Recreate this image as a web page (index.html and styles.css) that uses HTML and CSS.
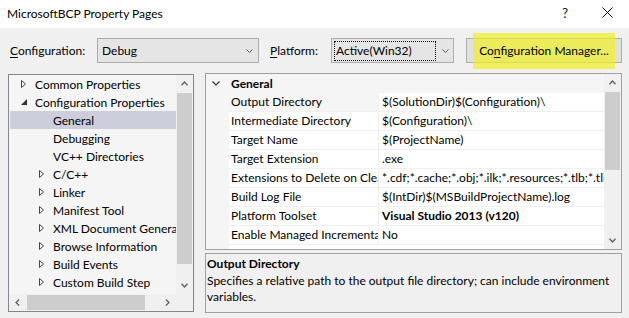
FILE: index.html
```html
<!DOCTYPE html>
<html>
<head>
<meta charset="utf-8">
<title>MicrosoftBCP Property Pages</title>
<link rel="stylesheet" href="styles.css">
</head>
<body>
<div class="titlebar">
  <span class="title">MicrosoftBCP Property Pages</span>
  <span class="help">?</span>
  <svg class="close" width="11" height="11" viewBox="0 0 11 11"><path d="M0.5 0.5L10.5 10.5M10.5 0.5L0.5 10.5" stroke="#000" stroke-width="1" fill="none"/></svg>
</div>

<div class="toolbar">
  <span class="lbl lbl-config"><u>C</u>onfiguration:</span>
  <div class="combo combo-config">
    <span>Debug</span>
    <svg class="chev" width="7" height="4" viewBox="0 0 7 4"><path d="M0.5 0.5L3.5 3.5L6.5 0.5" fill="none" stroke="#555"/></svg>
  </div>
  <span class="lbl lbl-platform"><u>P</u>latform:</span>
  <div class="combo combo-platform">
    <span class="focus">Active(Win32)</span>
    <svg class="chev" width="7" height="4" viewBox="0 0 7 4"><path d="M0.5 0.5L3.5 3.5L6.5 0.5" fill="none" stroke="#555"/></svg>
  </div>
  <div class="btn">
    <div class="highlight"></div>
    <span class="btn-text">Co<u>n</u>figuration Manager...</span>
  </div>
</div>

<div class="main">
  <div class="tree-panel">
    <div class="tree">
      <div class="item l0"><span class="exp"><svg width="5" height="8" viewBox="0 0 5 8"><path d="M0.5 0.5L4.5 4L0.5 7.5Z" fill="none" stroke="#444"/></svg></span>Common Properties</div>
      <div class="item l0"><span class="exp"><svg width="6" height="6" viewBox="0 0 6 6"><path d="M6 0L6 6L0 6Z" fill="#333"/></svg></span>Configuration Properties</div>
      <div class="item l1 selected"><span class="exp"></span>General</div>
      <div class="item l1"><span class="exp"></span>Debugging</div>
      <div class="item l1"><span class="exp"></span>VC++ Directories</div>
      <div class="item l1"><span class="exp"><svg width="5" height="8" viewBox="0 0 5 8"><path d="M0.5 0.5L4.5 4L0.5 7.5Z" fill="none" stroke="#444"/></svg></span>C/C++</div>
      <div class="item l1"><span class="exp"><svg width="5" height="8" viewBox="0 0 5 8"><path d="M0.5 0.5L4.5 4L0.5 7.5Z" fill="none" stroke="#444"/></svg></span>Linker</div>
      <div class="item l1"><span class="exp"><svg width="5" height="8" viewBox="0 0 5 8"><path d="M0.5 0.5L4.5 4L0.5 7.5Z" fill="none" stroke="#444"/></svg></span>Manifest Tool</div>
      <div class="item l1"><span class="exp"><svg width="5" height="8" viewBox="0 0 5 8"><path d="M0.5 0.5L4.5 4L0.5 7.5Z" fill="none" stroke="#444"/></svg></span>XML Document Generator</div>
      <div class="item l1"><span class="exp"><svg width="5" height="8" viewBox="0 0 5 8"><path d="M0.5 0.5L4.5 4L0.5 7.5Z" fill="none" stroke="#444"/></svg></span>Browse Information</div>
      <div class="item l1"><span class="exp"><svg width="5" height="8" viewBox="0 0 5 8"><path d="M0.5 0.5L4.5 4L0.5 7.5Z" fill="none" stroke="#444"/></svg></span>Build Events</div>
      <div class="item l1"><span class="exp"><svg width="5" height="8" viewBox="0 0 5 8"><path d="M0.5 0.5L4.5 4L0.5 7.5Z" fill="none" stroke="#444"/></svg></span>Custom Build Step</div>
    </div>
    <div class="vscroll">
      <div class="arrow"><svg width="7" height="5" viewBox="0 0 7 5"><path d="M0.5 4.2L3.5 1L6.5 4.2" fill="none" stroke="#606060" stroke-width="1.3"/></svg></div>
      <div class="track"><div class="vthumb tree-vthumb"></div></div>
      <div class="arrow"><svg width="7" height="5" viewBox="0 0 7 5"><path d="M0.5 0.8L3.5 4L6.5 0.8" fill="none" stroke="#606060" stroke-width="1.3"/></svg></div>
    </div>
    <div class="hscroll">
      <div class="arrow"><svg width="5" height="7" viewBox="0 0 5 7"><path d="M4.2 0.5L1 3.5L4.2 6.5" fill="none" stroke="#606060" stroke-width="1.3"/></svg></div>
      <div class="htrack"><div class="hthumb"></div></div>
      <div class="arrow"><svg width="5" height="7" viewBox="0 0 5 7"><path d="M0.8 0.5L4 3.5L0.8 6.5" fill="none" stroke="#606060" stroke-width="1.3"/></svg></div>
    </div>
    <div class="corner"></div>
  </div>

  <div class="right">
    <div class="grid">
      <div class="rows">
        <div class="cat">
          <span class="gut"><svg width="8" height="5" viewBox="0 0 8 5"><path d="M0.5 0.5L4 4L7.5 0.5" fill="none" stroke="#333" stroke-width="1.2"/></svg></span>
          <span class="cat-name">General</span>
        </div>
        <div class="row sel"><span class="gut"></span><span class="name">Output Directory</span><span class="val">$(SolutionDir)$(Configuration)\</span></div>
        <div class="row"><span class="gut"></span><span class="name">Intermediate Directory</span><span class="val">$(Configuration)\</span></div>
        <div class="row"><span class="gut"></span><span class="name">Target Name</span><span class="val">$(ProjectName)</span></div>
        <div class="row"><span class="gut"></span><span class="name">Target Extension</span><span class="val">.exe</span></div>
        <div class="row"><span class="gut"></span><span class="name">Extensions to Delete on Clean</span><span class="val">*.cdf;*.cache;*.obj;*.ilk;*.resources;*.tlb;*.tli;*.tlh;*.tmp;*.rsp</span></div>
        <div class="row"><span class="gut"></span><span class="name">Build Log File</span><span class="val">$(IntDir)$(MSBuildProjectName).log</span></div>
        <div class="row"><span class="gut"></span><span class="name">Platform Toolset</span><span class="val bold">Visual Studio 2013 (v120)</span></div>
        <div class="row"><span class="gut"></span><span class="name">Enable Managed Incremental Build</span><span class="val">No</span></div>
        <div class="filler"><span class="gut"></span></div>
      </div>
      <div class="vscroll grid-scroll">
        <div class="arrow"><svg width="7" height="5" viewBox="0 0 7 5"><path d="M0.5 4.2L3.5 1L6.5 4.2" fill="none" stroke="#606060" stroke-width="1.3"/></svg></div>
        <div class="track"><div class="vthumb grid-vthumb"></div></div>
        <div class="arrow"><svg width="7" height="5" viewBox="0 0 7 5"><path d="M0.5 0.8L3.5 4L6.5 0.8" fill="none" stroke="#606060" stroke-width="1.3"/></svg></div>
      </div>
    </div>
    <div class="desc">
      <div class="desc-title">Output Directory</div>
      <div class="desc-text">Specifies a relative path to the output file directory; can include environment<br>variables.</div>
    </div>
  </div>
</div>
</body>
</html>
```

FILE: styles.css
```css
* { box-sizing: border-box; }

html, body {
  margin: 0;
  padding: 0;
}

body {
  width: 629px;
  height: 318px;
  overflow: hidden;
  background: #f0f0f0;
  font-family: Lato, "Liberation Sans", sans-serif;
  font-size: 12px;
  color: #000;
}

u { text-decoration: underline; text-underline-offset: 2px; }

/* title bar */
.titlebar {
  height: 28px;
  background: #fff;
  display: flex;
  align-items: center;
}
.title {
  padding-left: 7px;
  margin-top: -2px;
}
.help {
  margin-left: auto;
  margin-top: -3px;
  font-size: 13px;
  color: #111;
}
.close {
  margin-left: 34px;
  margin-right: 16px;
  margin-top: -4px;
}

/* toolbar */
.toolbar {
  display: flex;
  align-items: center;
  height: 25px;
  margin-top: 10px;
  padding-left: 10px;
}
.lbl-config { width: 87px; }
.lbl-platform { width: 61px; margin-left: 11px; }

.combo {
  height: 25px;
  border: 1px solid #acacac;
  background: #e5e5e5;
  display: flex;
  align-items: center;
}
.combo-config {
  width: 162px;
  padding-left: 4px;
  padding-right: 5px;
}
.combo-platform {
  width: 123px;
  padding-left: 2px;
  padding-right: 4px;
}
.chev { margin-left: auto; }
.focus {
  display: block;
  width: 102px;
  height: 20px;
  line-height: 18px;
  border: 1px dotted #000;
  padding-left: 1px;
}

.btn {
  position: relative;
  margin-left: 12px;
  width: 156px;
  height: 25px;
  border: 1px solid #adadad;
  background: #e1e1e1;
  display: flex;
  align-items: center;
  justify-content: center;
}
.btn-text {
  position: relative;
  z-index: 1;
}
.highlight {
  position: absolute;
  left: 6px;
  top: -6px;
  width: 142px;
  height: 36px;
  background: rgba(240, 238, 40, 0.72);
}

/* main */
.main {
  display: flex;
  align-items: flex-start;
  margin-top: 10px;
  padding-left: 8px;
}

.tree-panel {
  width: 186px;
  height: 238px;
  margin-top: 1px;
  border: 1px solid #828790;
  display: grid;
  grid-template-columns: 167px 17px;
  grid-template-rows: 219px 17px;
  background: #f5f5f5;
}
.tree {
  overflow: hidden;
}
.item {
  height: 18px;
  margin-left: 1px;
  display: flex;
  align-items: center;
  white-space: nowrap;
  overflow: hidden;
}
.item.l1 { padding-left: 18px; }
.item.selected { background: #cccedb; }
.exp {
  width: 25px;
  flex: none;
  padding-left: 11px;
  display: flex;
  align-items: center;
}

.vscroll {
  display: flex;
  flex-direction: column;
  background: #f0f0f0;
}
.vscroll .arrow {
  height: 17px;
  flex: none;
  display: flex;
  align-items: center;
  justify-content: center;
}
.track {
  flex: 1;
}
.vthumb {
  background: #cdcdcd;
  margin: 0 1px;
}
.tree-vthumb { margin-top: 1px; height: 171px; }

.hscroll {
  display: flex;
  background: #f0f0f0;
}
.hscroll .arrow {
  width: 17px;
  flex: none;
  display: flex;
  align-items: center;
  justify-content: center;
}
.htrack { flex: 1; padding: 1px 0 1px 1px; }
.hthumb {
  width: 118px;
  height: 15px;
  background: #cdcdcd;
}
.corner { background: #f0f0f0; }

/* right side */
.right {
  margin-left: 11px;
  width: 417px;
  display: flex;
  flex-direction: column;
}
.grid {
  height: 177px;
  border: 1px solid #a0a0a0;
  display: flex;
  background: #fff;
}
.rows {
  flex: 1;
  display: flex;
  flex-direction: column;
  overflow: hidden;
}
.cat, .row {
  height: 19px;
  display: flex;
  flex: none;
  white-space: nowrap;
}
.cat { background: #f5f5f5; align-items: center; }
.gut {
  width: 23px;
  flex: none;
  background: #f5f5f5;
  display: flex;
  align-items: center;
  padding-left: 6px;
}
.cat-name {
  font-weight: bold;
  padding-left: 2px;
}
.name, .val {
  border-bottom: 1px solid #f0f0f0;
  overflow: hidden;
  line-height: 18px;
}
.name {
  width: 150px;
  flex: none;
  padding-left: 2px;
  border-right: 1px solid #f0f0f0;
}
.val {
  flex: 1;
  padding-left: 3px;
}
.row.sel .name { background: #f5f5f5; }
.bold { font-weight: bold; }
.filler { flex: 1; display: flex; }

.grid-scroll { width: 17px; flex: none; background: #f0f0f0; }
.grid-vthumb { margin-top: 1px; height: 78px; }

.desc {
  margin-top: 3px;
  height: 60px;
  border: 1px solid #a0a0a0;
  background: #f0f0f0;
  padding: 1px 1px 0 1px;
}
.desc-title {
  font-weight: bold;
  line-height: 17px;
  margin-bottom: 1px;
}
.desc-text { line-height: 16px; }
```
